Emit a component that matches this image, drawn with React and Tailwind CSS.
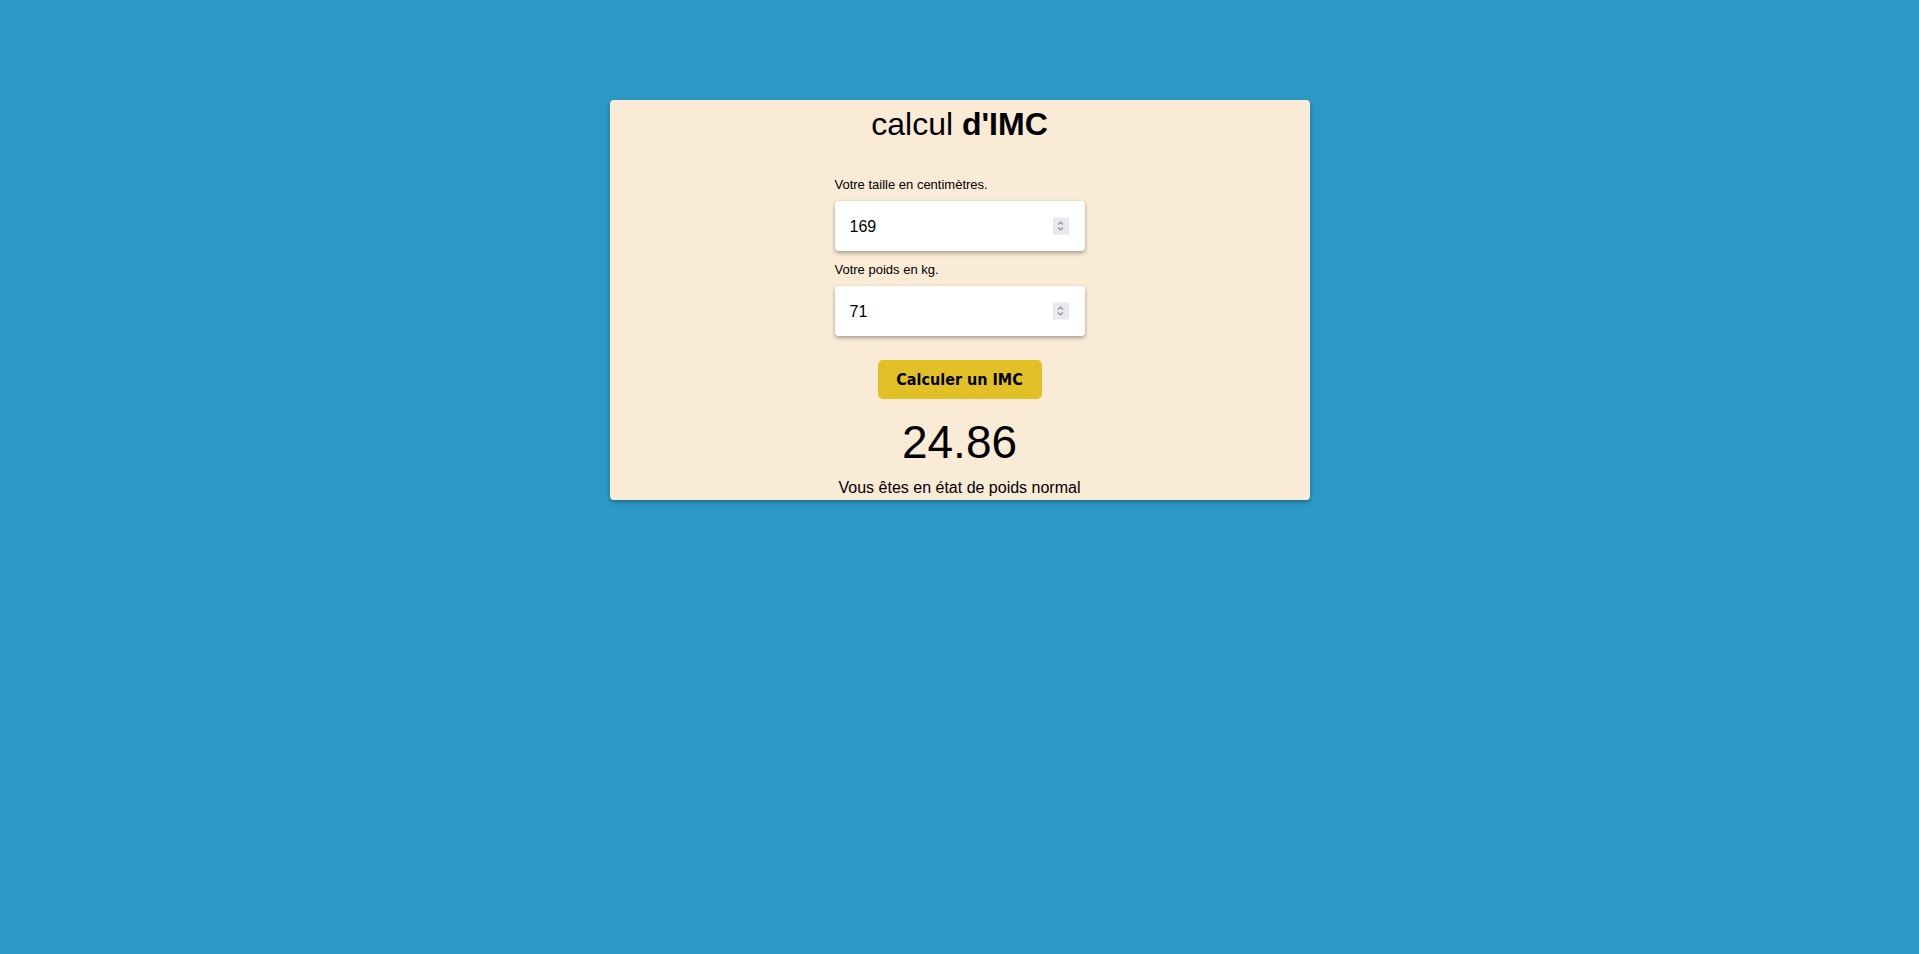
import React from "react";

function Spin() {
  return (
    <div className="absolute right-[16px] top-1/2 -translate-y-1/2 w-[16px] h-[17px] bg-[#e9e9ed] flex items-center justify-center">
      <svg width="9" height="13" viewBox="0 0 9 13" fill="none" stroke="#8f8f9d" strokeWidth="1.2">
        <path d="M2 5 L4.5 2.5 L7 5" />
        <path d="M2 8 L4.5 10.5 L7 8" />
      </svg>
    </div>
  );
}

function Field({ label, value }) {
  return (
    <div className="flex flex-col">
      <label className="text-[13px] leading-[15px] text-black mb-[9px]" style={{ fontFamily: '"Liberation Sans", Arial, sans-serif' }}>
        {label}
      </label>
      <div className="relative w-[250px] h-[50px] bg-white rounded-[4px] shadow-[0_2px_4px_rgba(0,0,0,0.35)] flex items-center pl-[15px] pt-[1px]">
        <span className="text-[16px] text-black" style={{ fontFamily: '"Liberation Sans", Arial, sans-serif' }}>{value}</span>
        <Spin />
      </div>
    </div>
  );
}

export default function App() {
  return (
    <div className="min-h-[954px] w-full bg-[#2d97c5] pt-[100px]" style={{ fontFamily: '"Liberation Sans", Arial, sans-serif' }}>
      <div className="mx-auto w-[700px] h-[400px] bg-[#faebd7] rounded-[4px] shadow-[0_2px_4px_rgba(0,0,0,0.3)] flex flex-col items-center pt-[6px] overflow-hidden">
        <h1 className="text-[32px] leading-[37px] text-black font-normal m-0">
          calcul <b className="font-bold">d'IMC</b>
        </h1>
        <div className="mt-[34px] flex flex-col gap-[11px]">
          <Field label="Votre taille en centimètres." value="169" />
          <Field label="Votre poids en kg." value="71" />
        </div>
        <button
          className="mt-[24px] w-[164px] h-[39px] bg-[#e2c027] rounded-[5px] text-[16px] font-bold text-black"
          style={{ fontFamily: '"DejaVu Sans Condensed", "DejaVu Sans", sans-serif', fontStretch: "semi-condensed" }}
        >
          Calculer un IMC
        </button>
        <div className="mt-[17px] text-[46px] leading-[53px] text-black">24.86</div>
        <div className="mt-[10px] text-[16px] leading-[18px] text-black">Vous êtes en état de poids normal</div>
      </div>
    </div>
  );
}
